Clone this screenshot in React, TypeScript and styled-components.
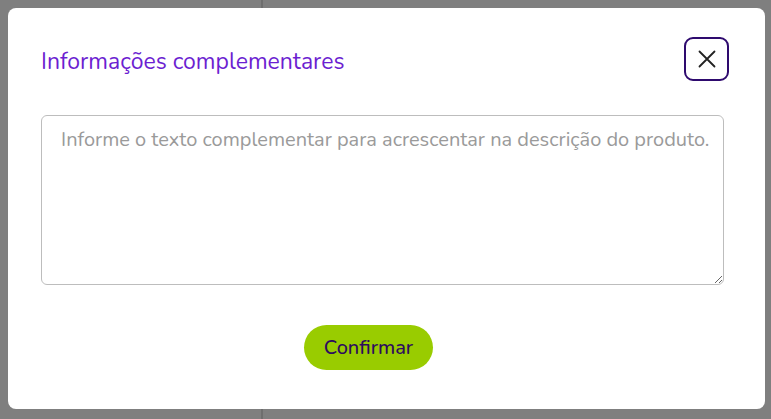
import React, { useState } from 'react';
import styled, { createGlobalStyle } from 'styled-components';

const GlobalStyle = createGlobalStyle`
    html, body {
        margin: 0;
        padding: 0;
        height: 100%;
    }
    body {
        font-family: 'Nunito', 'Open Sans', 'Noto Sans', sans-serif;
        background: #7f7f7f;
    }
    #root {
        height: 100%;
    }
`;

const Backdrop = styled.div`
    height: 100vh;
    box-sizing: border-box;
    padding: 8px 6px 10px 8px;
    display: flex;
    background:
        linear-gradient(90deg, transparent 261px, #6e6e6e 261px, #6e6e6e 263px, transparent 263px),
        #7f7f7f;
`;

const ModalWindow = styled.div`
    flex: 1;
    display: flex;
    flex-direction: column;
    background: #ffffff;
    border-radius: 8px;
    padding: 29px 36px 39px 33px;
`;

const Header = styled.div`
    display: flex;
    align-items: center;
    justify-content: space-between;
`;

const Title = styled.h2`
    margin: 0;
    padding-top: 4px;
    font-size: 23px;
    font-weight: 400;
    color: #6c1fd1;
`;

const CloseButton = styled.button`
    width: 45px;
    height: 44px;
    display: flex;
    align-items: center;
    justify-content: center;
    background: #ffffff;
    border: 2px solid #2e0a6e;
    border-radius: 9px;
    padding: 0;
    cursor: pointer;
`;

const Body = styled.div`
    margin-top: 34px;
    padding-right: 5px;
    display: flex;
`;

const TextArea = styled.textarea`
    flex: 1;
    height: 170px;
    box-sizing: border-box;
    border: 1px solid #bdbdbd;
    border-radius: 6px;
    padding: 10px 12px 10px 19px;
    font-family: inherit;
    font-size: 20px;
    line-height: 28px;
    color: #333;
    resize: vertical;
    outline: none;

    &::placeholder {
        color: #9a9a9a;
    }
`;

const Footer = styled.div`
    display: flex;
    justify-content: center;
    margin-top: 40px;
    padding-right: 33px;
`;

const ConfirmButton = styled.button`
    height: 45px;
    padding: 0 20px;
    border: none;
    border-radius: 23px;
    background: #99cc00;
    color: #2d0b5e;
    font-family: inherit;
    font-size: 20px;
    font-weight: 500;
    cursor: pointer;
`;

const CloseIcon = () => (
    <svg width="18" height="18" viewBox="0 0 18 18" fill="none">
        <path d="M1.5 1.5 L16.5 16.5 M16.5 1.5 L1.5 16.5" stroke="#222" strokeWidth="1.8" strokeLinecap="round" />
    </svg>
);

const App = () => {
    const [text, setText] = useState('');

    return (
        <>
            <GlobalStyle />
            <Backdrop>
                <ModalWindow>
                    <Header>
                        <Title>Informações complementares</Title>
                        <CloseButton aria-label="Fechar">
                            <CloseIcon />
                        </CloseButton>
                    </Header>
                    <Body>
                        <TextArea
                            value={text}
                            onChange={e => setText(e.target.value)}
                            placeholder="Informe o texto complementar para acrescentar na descrição do produto."
                        />
                    </Body>
                    <Footer>
                        <ConfirmButton>Confirmar</ConfirmButton>
                    </Footer>
                </ModalWindow>
            </Backdrop>
        </>
    );
};

export default App;
